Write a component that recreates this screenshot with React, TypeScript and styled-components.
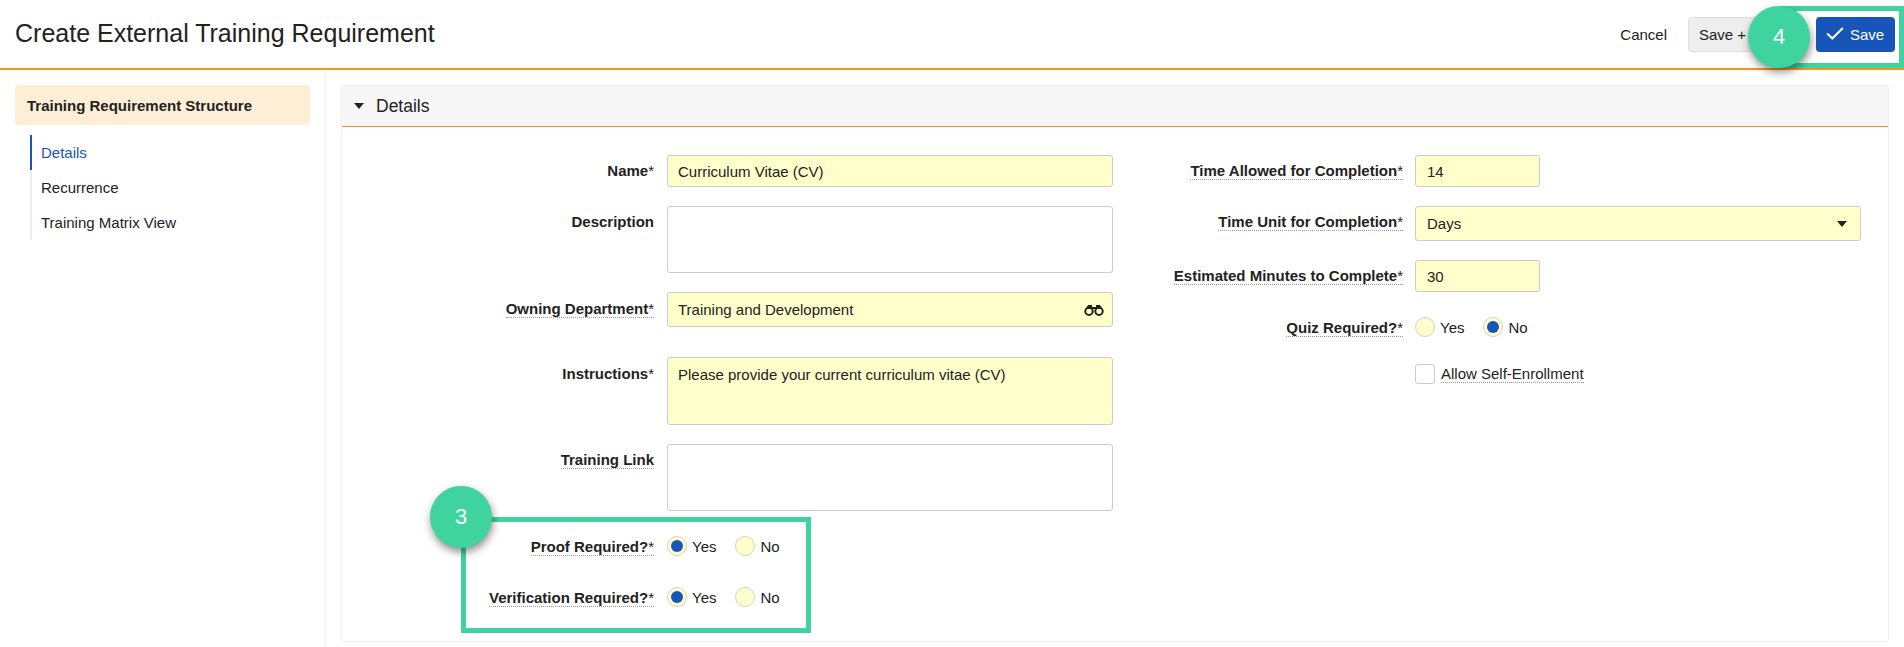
import styled, { createGlobalStyle } from 'styled-components';
import { Check } from 'lucide-react';

const GlobalStyle = createGlobalStyle`
    html, body {
        margin: 0;
        padding: 0;
        height: 100%;
        overflow: hidden;
        background: #fff;
    }
    body {
        font-family: 'Liberation Sans', Arial, sans-serif;
        font-size: 15px;
        color: #222;
    }
    * {
        box-sizing: border-box;
    }
`;

const Page = styled.div`
    height: 100vh;
    display: flex;
    flex-direction: column;
`;
const Header = styled.header`
    position: relative;
    flex: none;
    height: 70px;
    padding: 0 9px 0 15px;
    display: flex;
    align-items: center;
    justify-content: space-between;
    border-bottom: 2px solid #f7941d;
`;
const Title = styled.h1`
    margin: 0 0 1px;
    font-size: 25px;
    font-weight: 400;
    color: #222;
`;
const Actions = styled.div`
    display: flex;
    align-items: center;
    gap: 16px;
`;
const CancelLink = styled.a`
    margin-right: 5px;
    color: #222;
`;
const SecondaryButton = styled.button`
    width: 112px;
    height: 35px;
    padding: 0 10px;
    text-align: left;
    font: inherit;
    color: #222;
    background: #eee;
    border: 1px solid #ddd;
    border-radius: 4px;
`;
const SaveButton = styled.button`
    width: 79px;
    height: 35px;
    padding: 0 0 0 8px;
    display: flex;
    align-items: center;
    gap: 4px;
    font: inherit;
    color: #fff;
    background: #1756b8;
    border: none;
    border-radius: 4px;
`;
const Highlight = styled.div`
    position: absolute;
    border: 5px solid #3fd3a0;
`;
const SaveHighlight = styled(Highlight)`
    top: 6px;
    left: 1779px;
    width: 125px;
    height: 62px;
`;
const RequiredHighlight = styled(Highlight)`
    top: 362px;
    left: 119px;
    width: 350px;
    height: 116px;
`;
const Badge = styled.div<{ $top: number }>`
    position: absolute;
    top: ${props => props.$top}px;
    left: -36px;
    width: 62px;
    height: 62px;
    display: flex;
    align-items: center;
    justify-content: center;
    font-size: 22px;
    color: #fff;
    background: #3fd3a0;
    border-radius: 50%;
    box-shadow: 1px 4px 8px rgba(0, 0, 0, 0.45);
`;

const Main = styled.div`
    flex: 1;
    display: flex;
`;
const Sidebar = styled.aside`
    flex: none;
    width: 326px;
    padding: 15px 15px 0;
    border-right: 1px solid #eee;
`;
const SidebarTitle = styled.div`
    height: 40px;
    padding-left: 12px;
    display: flex;
    align-items: center;
    font-weight: 700;
    color: #222;
    background: #ffeed6;
    border-radius: 3px;
`;
const Nav = styled.nav`
    margin: 10px 0 0 15px;
`;
const NavItem = styled.a<{ $active?: boolean }>`
    height: 35px;
    padding-left: 9px;
    display: flex;
    align-items: center;
    color: ${props => (props.$active ? '#1756b8' : '#222')};
    border-left: 2px solid ${props => (props.$active ? '#1756b8' : '#eee')};
`;

const Content = styled.main`
    flex: 1;
    padding: 15px 15px 0;
`;
const Panel = styled.section`
    border: 1px solid #eee;
    border-radius: 3px;
`;
const PanelHeader = styled.div`
    height: 41px;
    padding-left: 12px;
    display: flex;
    align-items: center;
    gap: 12px;
    font-size: 17.5px;
    color: #222;
    background: #f7f7f7;
    border-bottom: 1px solid #f7941d;
`;
const Caret = styled.span`
    width: 0;
    height: 0;
    border-style: solid;
    border-width: 6px 5.5px 0;
    border-color: #222 transparent transparent;
`;
const PanelBody = styled.div`
    padding: 28px 0 34px;
    display: flex;
    align-items: flex-start;
`;
const LeftColumn = styled.div`
    position: relative;
    width: 771px;
`;
const RightColumn = styled.div`
    flex: 1;
`;
const Row = styled.div<{ $gap: number }>`
    display: grid;
    align-items: start;
    margin-bottom: ${props => props.$gap}px;
`;
const LeftRow = styled(Row)`
    grid-template-columns: 312px 446px;
    column-gap: 13px;
`;
const RightRow = styled(Row)`
    grid-template-columns: 290px 446px;
    column-gap: 12px;
`;
const LabelCell = styled.div<{ $top?: number }>`
    padding-top: ${props => props.$top ?? 7}px;
    text-align: right;
    line-height: 17px;
    font-weight: 700;
    color: #222;
`;
const CenteredLabel = styled(LabelCell)`
    padding-top: 2px;
`;
const Hint = styled.span`
    display: inline-block;
    border-bottom: 1px dotted #999;
`;
const Required = styled.span`
    font-weight: 400;
`;
const fieldBorder = '1px solid #ccc';
const TextInput = styled.input<{ $narrow?: boolean }>`
    display: block;
    width: ${props => (props.$narrow ? '125px' : '100%')};
    height: 32px;
    padding: 0 ${props => (props.$narrow ? '11px' : '10px')};
    font: inherit;
    color: #222;
    background: #ffc;
    border: ${fieldBorder};
    border-radius: 3px;
    outline: none;
`;
const TextArea = styled.textarea<{ $required?: boolean; $height: number }>`
    display: block;
    width: 100%;
    height: ${props => props.$height}px;
    padding: 7px 10px;
    resize: none;
    font: inherit;
    line-height: 20px;
    color: #222;
    background: ${props => (props.$required ? '#ffc' : '#fff')};
    border: ${fieldBorder};
    border-radius: 3px;
    outline: none;
`;
const LookupField = styled.div`
    height: 35px;
    padding: 0 8px 0 10px;
    display: flex;
    align-items: center;
    justify-content: space-between;
    background: #ffc;
    border: ${fieldBorder};
    border-radius: 3px;
`;
const SelectField = styled(LookupField)`
    padding: 0 13px 0 11px;
`;
const SelectCaret = styled.span`
    width: 0;
    height: 0;
    border-style: solid;
    border-width: 6px 5.5px 0;
    border-color: #222 transparent transparent;
`;
const RadioGroup = styled.div`
    height: 20px;
    display: flex;
    align-items: center;
    gap: 19px;
`;
const RadioOption = styled.label`
    display: flex;
    align-items: center;
    gap: 5px;
`;
const RadioMark = styled.span<{ $checked?: boolean }>`
    width: 20px;
    height: 20px;
    display: flex;
    align-items: center;
    justify-content: center;
    background: #ffc;
    border: 1px solid #d2d2c8;
    border-radius: 50%;
    &::after {
        content: '';
        display: ${props => (props.$checked ? 'block' : 'none')};
        width: 12px;
        height: 12px;
        background: #1756b8;
        border-radius: 50%;
    }
`;
const CheckboxOption = styled.label`
    height: 20px;
    display: flex;
    align-items: center;
    gap: 6px;
`;
const CheckMark = styled.span`
    width: 20px;
    height: 20px;
    background: #fff;
    border: 1px solid #ccc;
    border-radius: 3px;
`;

// field label with the dotted help underline and the required star
function FieldLabel({ text, required, hint = true }: { text: string; required?: boolean; hint?: boolean }) {
    const content = (
        <>
            {text}
            {required && <Required>*</Required>}
        </>
    );
    return hint ? <Hint>{content}</Hint> : content;
}

function YesNo({ value }: { value: 'yes' | 'no' }) {
    return (
        <RadioGroup>
            <RadioOption>
                <RadioMark $checked={value === 'yes'} />
                Yes
            </RadioOption>
            <RadioOption>
                <RadioMark $checked={value === 'no'} />
                No
            </RadioOption>
        </RadioGroup>
    );
}

function Binoculars() {
    return (
        <svg width="20" height="12" viewBox="0 0 20 12" fill="none">
            <circle cx="5" cy="7.2" r="3.7" stroke="#222" strokeWidth="2" />
            <circle cx="15" cy="7.2" r="3.7" stroke="#222" strokeWidth="2" />
            <path d="M2 5 L4 1 H8 V3 H12 V1 H16 L18 5 Z" fill="#222" />
        </svg>
    );
}

function App() {
    return (
        <Page>
            <GlobalStyle />
            <Header>
                <Title>Create External Training Requirement</Title>
                <Actions>
                    <CancelLink>Cancel</CancelLink>
                    <SecondaryButton>Save +</SecondaryButton>
                    <SaveButton>
                        <Check size={22} strokeWidth={2.2} />
                        Save
                    </SaveButton>
                </Actions>
                <SaveHighlight>
                    <Badge $top={-5}>4</Badge>
                </SaveHighlight>
            </Header>
            <Main>
                <Sidebar>
                    <SidebarTitle>Training Requirement Structure</SidebarTitle>
                    <Nav>
                        <NavItem $active>Details</NavItem>
                        <NavItem>Recurrence</NavItem>
                        <NavItem>Training Matrix View</NavItem>
                    </Nav>
                </Sidebar>
                <Content>
                    <Panel>
                        <PanelHeader>
                            <Caret />
                            Details
                        </PanelHeader>
                        <PanelBody>
                            <LeftColumn>
                                <LeftRow $gap={19}>
                                    <LabelCell>
                                        <FieldLabel text="Name" required hint={false} />
                                    </LabelCell>
                                    <TextInput readOnly value="Curriculum Vitae (CV)" />
                                </LeftRow>
                                <LeftRow $gap={19}>
                                    <LabelCell>
                                        <FieldLabel text="Description" hint={false} />
                                    </LabelCell>
                                    <TextArea readOnly $height={67} />
                                </LeftRow>
                                <LeftRow $gap={30}>
                                    <LabelCell $top={8}>
                                        <FieldLabel text="Owning Department" required />
                                    </LabelCell>
                                    <LookupField>
                                        Training and Development
                                        <Binoculars />
                                    </LookupField>
                                </LeftRow>
                                <LeftRow $gap={19}>
                                    <LabelCell $top={8}>
                                        <FieldLabel text="Instructions" required hint={false} />
                                    </LabelCell>
                                    <TextArea
                                        readOnly
                                        $required
                                        $height={68}
                                        value="Please provide your current curriculum vitae (CV)"
                                    />
                                </LeftRow>
                                <LeftRow $gap={25}>
                                    <LabelCell>
                                        <FieldLabel text="Training Link" />
                                    </LabelCell>
                                    <TextArea readOnly $height={67} />
                                </LeftRow>
                                <LeftRow $gap={31}>
                                    <CenteredLabel>
                                        <FieldLabel text="Proof Required?" required />
                                    </CenteredLabel>
                                    <YesNo value="yes" />
                                </LeftRow>
                                <LeftRow $gap={0}>
                                    <CenteredLabel>
                                        <FieldLabel text="Verification Required?" required />
                                    </CenteredLabel>
                                    <YesNo value="yes" />
                                </LeftRow>
                                <RequiredHighlight>
                                    <Badge $top={-36}>3</Badge>
                                </RequiredHighlight>
                            </LeftColumn>
                            <RightColumn>
                                <RightRow $gap={19}>
                                    <LabelCell>
                                        <FieldLabel text="Time Allowed for Completion" required />
                                    </LabelCell>
                                    <TextInput readOnly $narrow value="14" />
                                </RightRow>
                                <RightRow $gap={19}>
                                    <LabelCell>
                                        <FieldLabel text="Time Unit for Completion" required />
                                    </LabelCell>
                                    <SelectField>
                                        Days
                                        <SelectCaret />
                                    </SelectField>
                                </RightRow>
                                <RightRow $gap={25}>
                                    <LabelCell>
                                        <FieldLabel text="Estimated Minutes to Complete" required />
                                    </LabelCell>
                                    <TextInput readOnly $narrow value="30" />
                                </RightRow>
                                <RightRow $gap={27}>
                                    <CenteredLabel>
                                        <FieldLabel text="Quiz Required?" required />
                                    </CenteredLabel>
                                    <YesNo value="no" />
                                </RightRow>
                                <RightRow $gap={0}>
                                    <span />
                                    <CheckboxOption>
                                        <CheckMark />
                                        <Hint>Allow Self-Enrollment</Hint>
                                    </CheckboxOption>
                                </RightRow>
                            </RightColumn>
                        </PanelBody>
                    </Panel>
                </Content>
            </Main>
        </Page>
    );
}

export default App;
